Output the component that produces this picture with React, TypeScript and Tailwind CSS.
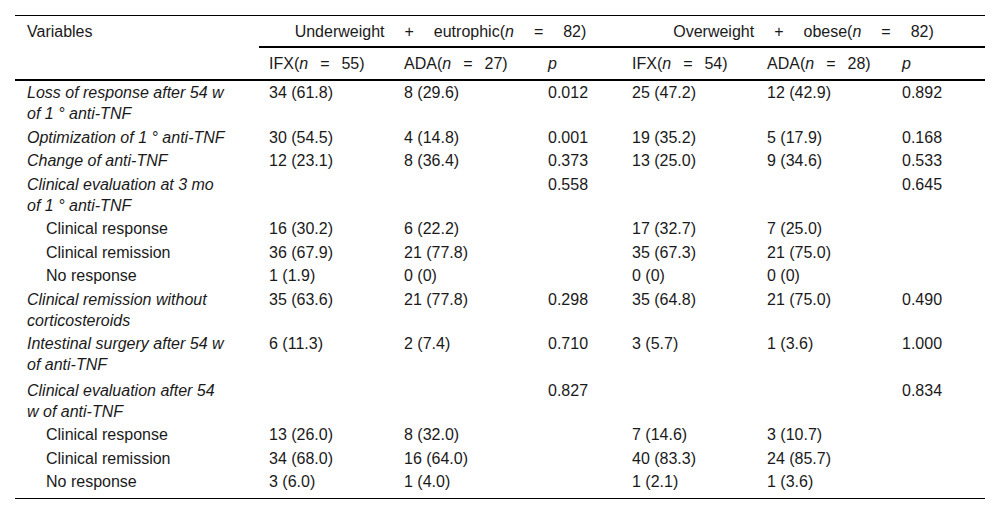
import React from "react";

type Row = {
  label: string;
  italic?: boolean;
  indent?: boolean;
  big?: boolean;
  v: string[];
};

const D = "1\u00a0°";

const rows: Row[] = [
  { label: `Loss of response after 54 w of ${D} anti-TNF`, italic: true, v: ["34 (61.8)", "8 (29.6)", "0.012", "25 (47.2)", "12 (42.9)", "0.892"] },
  { label: `Optimization of ${D} anti-TNF`, italic: true, v: ["30 (54.5)", "4 (14.8)", "0.001", "19 (35.2)", "5 (17.9)", "0.168"] },
  { label: "Change of anti-TNF", italic: true, v: ["12 (23.1)", "8 (36.4)", "0.373", "13 (25.0)", "9 (34.6)", "0.533"] },
  { label: `Clinical evaluation at 3 mo of ${D} anti-TNF`, italic: true, v: ["", "", "0.558", "", "", "0.645"] },
  { label: "Clinical response", indent: true, v: ["16 (30.2)", "6 (22.2)", "", "17 (32.7)", "7 (25.0)", ""] },
  { label: "Clinical remission", indent: true, v: ["36 (67.9)", "21 (77.8)", "", "35 (67.3)", "21 (75.0)", ""] },
  { label: "No response", indent: true, v: ["1 (1.9)", "0 (0)", "", "0 (0)", "0 (0)", ""] },
  { label: "Clinical remission without corticosteroids", italic: true, v: ["35 (63.6)", "21 (77.8)", "0.298", "35 (64.8)", "21 (75.0)", "0.490"] },
  { label: "Intestinal surgery after 54 w of anti-TNF", italic: true, big: true, v: ["6 (11.3)", "2 (7.4)", "0.710", "3 (5.7)", "1 (3.6)", "1.000"] },
  { label: "Clinical evaluation after 54 w of anti-TNF", italic: true, v: ["", "", "0.827", "", "", "0.834"] },
  { label: "Clinical response", indent: true, v: ["13 (26.0)", "8 (32.0)", "", "7 (14.6)", "3 (10.7)", ""] },
  { label: "Clinical remission", indent: true, v: ["34 (68.0)", "16 (64.0)", "", "40 (83.3)", "24 (85.7)", ""] },
  { label: "No response", indent: true, v: ["3 (6.0)", "1 (4.0)", "", "1 (2.1)", "1 (3.6)", ""] },
];

const N = ({ pre, num }: { pre: string; num: string }) => (
  <span className="whitespace-nowrap">
    {pre}(<i>n</i>
    <span className="mx-[12px]">=</span>
    {num})
  </span>
);

const G = ({ a, b }: { a: string; b: string }) => (
  <span className="whitespace-nowrap">
    {a}
    <span className="mx-[20px]">+</span>
    {b}(<i>n</i>
    <span className="mx-[20px]">=</span>82)
  </span>
);

export default function App() {
  return (
    <div
      className="w-[1000px] h-[513px] bg-white text-[#1a1a1a] pt-[15px] px-[15px]"
      style={{ fontFamily: '"Liberation Sans", Arial, sans-serif' }}
    >
      <div className="grid grid-cols-[244px_135px_144px_84px_135px_135px_93px] border-t border-black border-b text-[16px] leading-[21px]">
        {/* header row 1 */}
        <div className="pl-3 pt-[5px] pb-[5px] h-[32px]">Variables</div>
        <div className="col-span-3 border-b-2 border-black flex items-center justify-center h-[32px]">
          <G a="Underweight" b="eutrophic" />
        </div>
        <div className="col-span-3 border-b-2 border-black flex items-center justify-center h-[32px]">
          <G a="Overweight" b="obese" />
        </div>
        {/* header row 2 */}
        <div className="border-b-2 border-black h-[33px]" />
        <div className="border-b-2 border-black pl-[10px] flex items-center h-[33px]"><N pre="IFX" num="55" /></div>
        <div className="border-b-2 border-black pl-[10px] flex items-center h-[33px]"><N pre="ADA" num="27" /></div>
        <div className="border-b-2 border-black pl-[10px] flex items-center h-[33px]"><i>p</i></div>
        <div className="border-b-2 border-black pl-[10px] flex items-center h-[33px]"><N pre="IFX" num="54" /></div>
        <div className="border-b-2 border-black pl-[10px] flex items-center h-[33px]"><N pre="ADA" num="28" /></div>
        <div className="border-b-2 border-black pl-[10px] flex items-center h-[33px]"><i>p</i></div>
        {/* body */}
        {rows.map((r, i) => {
          const last = i === rows.length - 1;
          const pad = last
            ? "pt-[1.25px] pb-[6px]"
            : r.big
            ? "pt-[1.25px] pb-[3px]"
            : "py-[1.25px]";
          return (
            <React.Fragment key={i}>
              <div
                className={
                  pad +
                  " pr-[32px] " +
                  (r.indent ? "pl-[31px] " : "pl-3 ") +
                  (r.italic ? "italic" : "")
                }
              >
                {r.label}
              </div>
              {r.v.map((c, j) => (
                <div key={j} className={pad + " pl-[10px]"}>
                  {c}
                </div>
              ))}
            </React.Fragment>
          );
        })}
      </div>
    </div>
  );
}
